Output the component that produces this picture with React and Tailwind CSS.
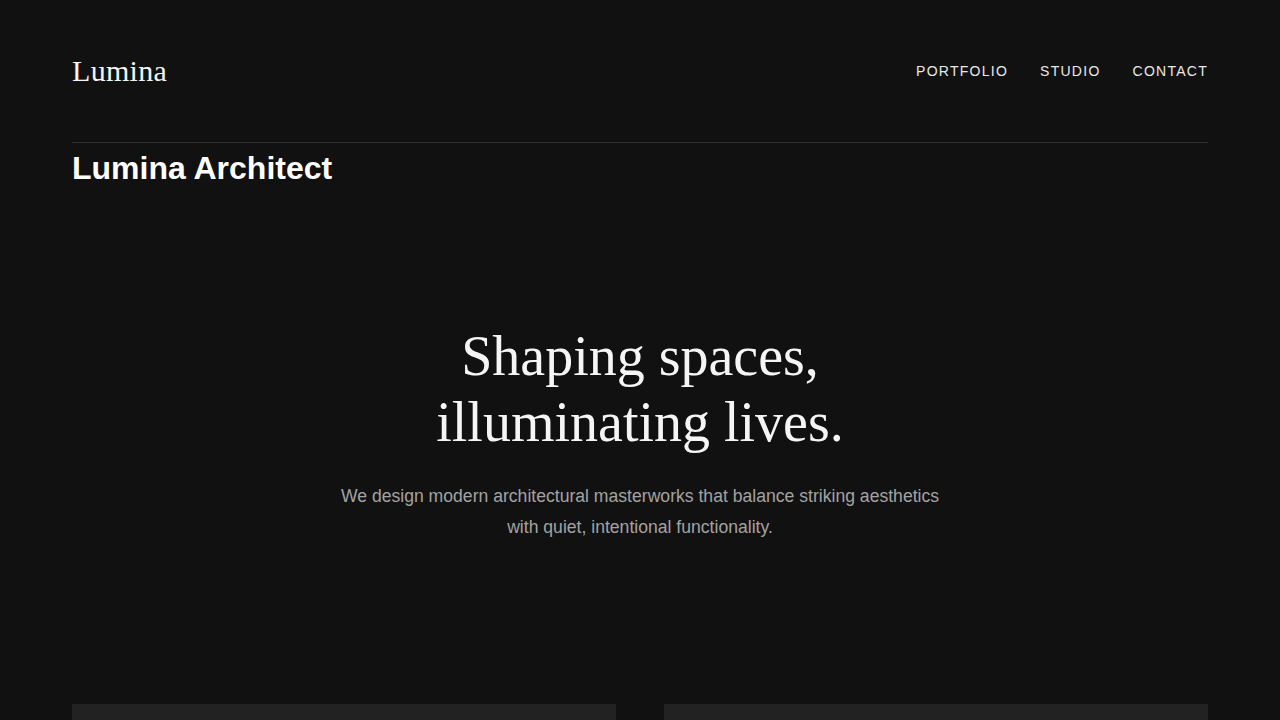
const navItems = ["Portfolio", "Studio", "Contact"];

const App = () => {
  return (
    <div className="min-h-screen bg-[#111111] text-[#f5f5f5] font-['Liberation_Sans',Arial,sans-serif]">
      <div className="px-[72px]">
        {/* Header */}
        <header className="flex items-center justify-between h-[143px] border-b border-[#2e2e2e]">
          <a href="#" className="font-['Liberation_Serif','Times_New_Roman',serif] text-[30px] leading-9 tracking-[0.01em] text-[#f5f5f5]">
            Lumina
          </a>
          <nav className="flex items-center gap-8">
            {navItems.map((item) => (
              <a
                key={item}
                href="#"
                className="text-sm uppercase tracking-[0.09em] text-[#e8e8e8] hover:text-white"
              >
                {item}
              </a>
            ))}
          </nav>
        </header>

        <h1 className="text-[32px] leading-[50px] font-bold text-white">Lumina Architect</h1>

        {/* Hero */}
        <section className="pt-[130px] pb-[161px] text-center">
          <h2 className="font-['Liberation_Serif','Times_New_Roman',serif] text-[56px] leading-[66px] text-[#f5f5f5]">
            Shaping spaces,
            <br />
            illuminating lives.
          </h2>
          <p className="mt-[26px] mx-auto max-w-[620px] text-[17.6px] leading-[31px] text-[#a3a3a3]">
            We design modern architectural masterworks that balance striking aesthetics with quiet, intentional functionality.
          </p>
        </section>

        {/* Projects */}
        <section className="grid grid-cols-2 gap-12 pb-24">
          <div className="h-[420px] bg-[#222222]"></div>
          <div className="h-[420px] bg-[#222222]"></div>
        </section>
      </div>
    </div>
  );
};

export default App;
